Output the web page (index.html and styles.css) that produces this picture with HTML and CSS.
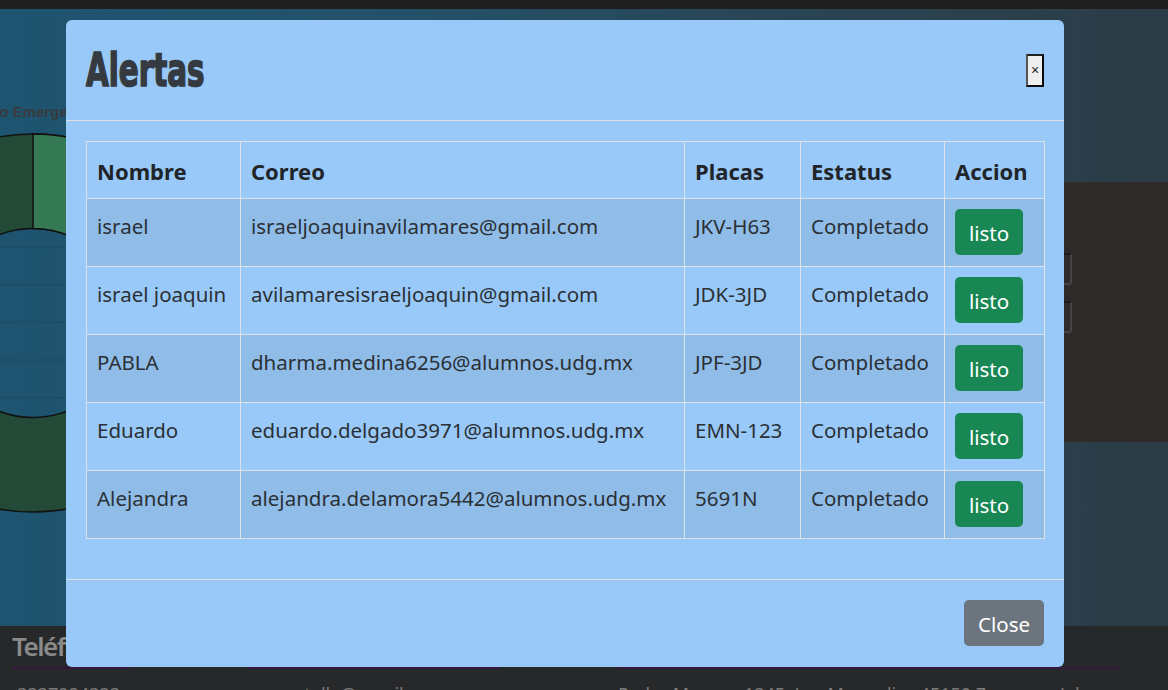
FILE: index.html
```html
<!DOCTYPE html>
<html lang="es">
<head>
<meta charset="utf-8">
<title>Alertas</title>
<link rel="stylesheet" href="styles.css">
</head>
<body>
<div class="topbar"></div>
<main class="hero">
  <section class="chart-col">
    <svg class="chart" width="300" height="617" viewBox="0 0 300 617">
      <text class="chart-title" x="-23" y="108">Tipo Emergencias</text>
      <g class="grid">
        <line x1="0" y1="238" x2="300" y2="238"/>
        <line x1="0" y1="276" x2="300" y2="276"/>
        <line x1="0" y1="313" x2="300" y2="313"/>
        <line x1="0" y1="351" x2="300" y2="351"/>
        <line x1="0" y1="389" x2="300" y2="389"/>
      </g>
      <path class="ring" fill-rule="evenodd" d="M33 125 A189 189 0 1 1 32.9 125 Z M33 219.5 A94.5 94.5 0 1 0 33.1 219.5 Z"/>
      <path class="slice" d="M33 125 A189 189 0 0 1 219.1 346.8 L126.1 330.4 A94.5 94.5 0 0 0 33 219.5 Z"/>
    </svg>
  </section>
  <section class="form-panel">
    <div class="field"></div>
    <div class="field"></div>
  </section>
</main>
<footer class="contact">
  <div class="contact-col col-phone">
    <h3 class="contact-head">Teléfono</h3>
    <p class="contact-text">3337984333</p>
  </div>
  <div class="contact-col col-mail">
    <h3 class="contact-head">Correo</h3>
    <p class="contact-text">pantalla@gmail.com</p>
  </div>
  <div class="contact-col col-addr">
    <h3 class="contact-head">Dirección</h3>
    <p class="contact-text">Pedro Moreno 1345, Las Magnolias 45150 Zapopan, Jal</p>
  </div>
</footer>

<div class="modal-layer">
  <div class="modal">
    <div class="modal-header">
      <h2 class="modal-title">Alertas</h2>
      <button class="x-btn" type="button">×</button>
    </div>
    <div class="modal-body">
      <table class="alerts">
        <colgroup>
          <col class="c-name"><col class="c-mail"><col class="c-plate"><col class="c-status"><col class="c-action">
        </colgroup>
        <thead>
          <tr><th>Nombre</th><th>Correo</th><th>Placas</th><th>Estatus</th><th>Accion</th></tr>
        </thead>
        <tbody>
          <tr><td>israel</td><td>israeljoaquinavilamares@gmail.com</td><td>JKV-H63</td><td>Completado</td><td><button class="btn-ok" type="button">listo</button></td></tr>
          <tr><td>israel joaquin</td><td>avilamaresisraeljoaquin@gmail.com</td><td>JDK-3JD</td><td>Completado</td><td><button class="btn-ok" type="button">listo</button></td></tr>
          <tr><td>PABLA</td><td>dharma.medina6256@alumnos.udg.mx</td><td>JPF-3JD</td><td>Completado</td><td><button class="btn-ok" type="button">listo</button></td></tr>
          <tr><td>Eduardo</td><td>eduardo.delgado3971@alumnos.udg.mx</td><td>EMN-123</td><td>Completado</td><td><button class="btn-ok" type="button">listo</button></td></tr>
          <tr><td>Alejandra</td><td>alejandra.delamora5442@alumnos.udg.mx</td><td>5691N</td><td>Completado</td><td><button class="btn-ok" type="button">listo</button></td></tr>
        </tbody>
      </table>
    </div>
    <div class="modal-footer">
      <button class="btn-close" type="button">Close</button>
    </div>
  </div>
</div>
</body>
</html>
```
FILE: styles.css
```css
* { box-sizing: border-box; }

html, body {
  margin: 0;
  padding: 0;
}

body {
  width: 1168px;
  height: 690px;
  overflow: hidden;
  position: relative;
  background: #262829;
  font-family: "Noto Sans", "Open Sans", sans-serif;
}

.topbar {
  height: 9px;
  background: #1e1e1e;
}

.hero {
  height: 617px;
  display: flex;
  justify-content: space-between;
  background: linear-gradient(90deg, #1e5470 0%, #245169 35%, #2a4250 75%, #2b3c46 100%);
}

.chart-col {
  width: 300px;
  overflow: visible;
}

.chart {
  display: block;
  overflow: visible;
}

.chart-title {
  font-family: "Liberation Sans", Arial, sans-serif;
  font-weight: bold;
  font-size: 15px;
  fill: #383a3d;
}

.grid line {
  stroke: #1a4a62;
  stroke-width: 1;
}

.ring {
  fill: #234a37;
  stroke: #111;
  stroke-width: 1.5;
}

.slice {
  fill: #367a55;
  stroke: #111;
  stroke-width: 1.5;
}

.form-panel {
  width: 420px;
  margin-top: 173px;
  height: 260px;
  background: #2d2a29;
  padding: 71px 96px 0 40px;
  display: flex;
  flex-direction: column;
  gap: 16px;
}

.field {
  height: 32px;
  border: 2px solid #444;
  border-top-color: #1a1a1a;
  border-left-color: #1a1a1a;
  border-radius: 3px;
}

.contact {
  display: flex;
  padding: 0 0 0 12px;
}

.contact-col {
  display: flex;
  flex-direction: column;
}

.col-phone { width: 117px; margin-right: 119px; }
.col-mail { width: 252px; margin-right: 118px; }
.col-addr { width: 500px; }

.contact-head {
  margin: 0;
  height: 43px;
  padding-top: 0;
  font-size: 26px;
  line-height: 41px;
  font-weight: 600;
  letter-spacing: -1.5px;
  color: #8a8a8a;
  border-bottom: 2px solid #33183c;
  white-space: nowrap;
  overflow: hidden;
}

.contact-text {
  margin: 13px 0 0;
  font-size: 18px;
  line-height: 24px;
  color: #7a7a7a;
  white-space: nowrap;
}

.col-phone .contact-text { padding-left: 5px; }
.col-mail .contact-text { padding-left: 24px; }

/* Modal */
.modal-layer {
  position: absolute;
  inset: 0;
  padding: 20px 0 0 66px;
}

.modal {
  width: 998px;
  background: #99c9f8;
  border-radius: 6px;
  color: #212529;
}

.modal-header {
  display: flex;
  align-items: center;
  justify-content: space-between;
  padding: 20px 20px 20px 20px;
  border-bottom: 1px solid #dee2e6;
}

.modal-title {
  margin: 0;
  font-family: "DejaVu Sans Condensed", "Liberation Sans", sans-serif;
  font-weight: bold;
  font-size: 46px;
  line-height: 60px;
  height: 60px;
  color: #343a40;
  -webkit-text-stroke: 1.6px #343a40;
  transform: scaleX(0.71);
  transform-origin: left center;
  white-space: nowrap;
}

.x-btn {
  width: 18px;
  height: 33px;
  padding: 0;
  margin-right: 0;
  background: #efefef;
  border-style: solid;
  border-width: 2px;
  border-color: #222 #0c0c0c #0c0c0c #555;
  font-family: "Liberation Sans", Arial, sans-serif;
  font-size: 14px;
  color: #222;
  line-height: 1;
}

.modal-body {
  padding: 20px;
}

.alerts {
  width: 958px;
  table-layout: fixed;
  border-collapse: collapse;
  margin-bottom: 20px;
}

.c-name { width: 154px; }
.c-mail { width: 444px; }
.c-plate { width: 116px; }
.c-status { width: 144px; }
.c-action { width: 100px; }

.alerts th,
.alerts td {
  border: 1px solid #dee2e6;
  text-align: left;
  vertical-align: top;
  white-space: nowrap;
}

.alerts th {
  padding: 11px 10px 9px;
  font-size: 22px;
  line-height: 36px;
  font-weight: 700;
  color: #212529;
}

.alerts td {
  padding: 10px 10px 11px;
  font-size: 20.5px;
  line-height: 34px;
  color: #2b3035;
}

.alerts tbody tr:nth-child(odd) td {
  background: #8fbde8;
}

.btn-ok {
  display: block;
  width: 68px;
  height: 46px;
  padding: 3px 0 0;
  border: none;
  border-radius: 5px;
  background: #198754;
  color: #fff;
  font-family: "Noto Sans", "Open Sans", sans-serif;
  font-size: 20.5px;
  line-height: 43px;
}

.modal-footer {
  display: flex;
  justify-content: flex-end;
  padding: 15px 15px 16px;
  border-top: 1px solid #dee2e6;
}

.btn-close {
  margin: 5px;
  width: 80px;
  height: 46px;
  padding: 2px 0 0;
  border: none;
  border-radius: 5px;
  background: #6c757d;
  color: #fff;
  font-family: "Noto Sans", "Open Sans", sans-serif;
  font-size: 20.5px;
  line-height: 44px;
}
```
